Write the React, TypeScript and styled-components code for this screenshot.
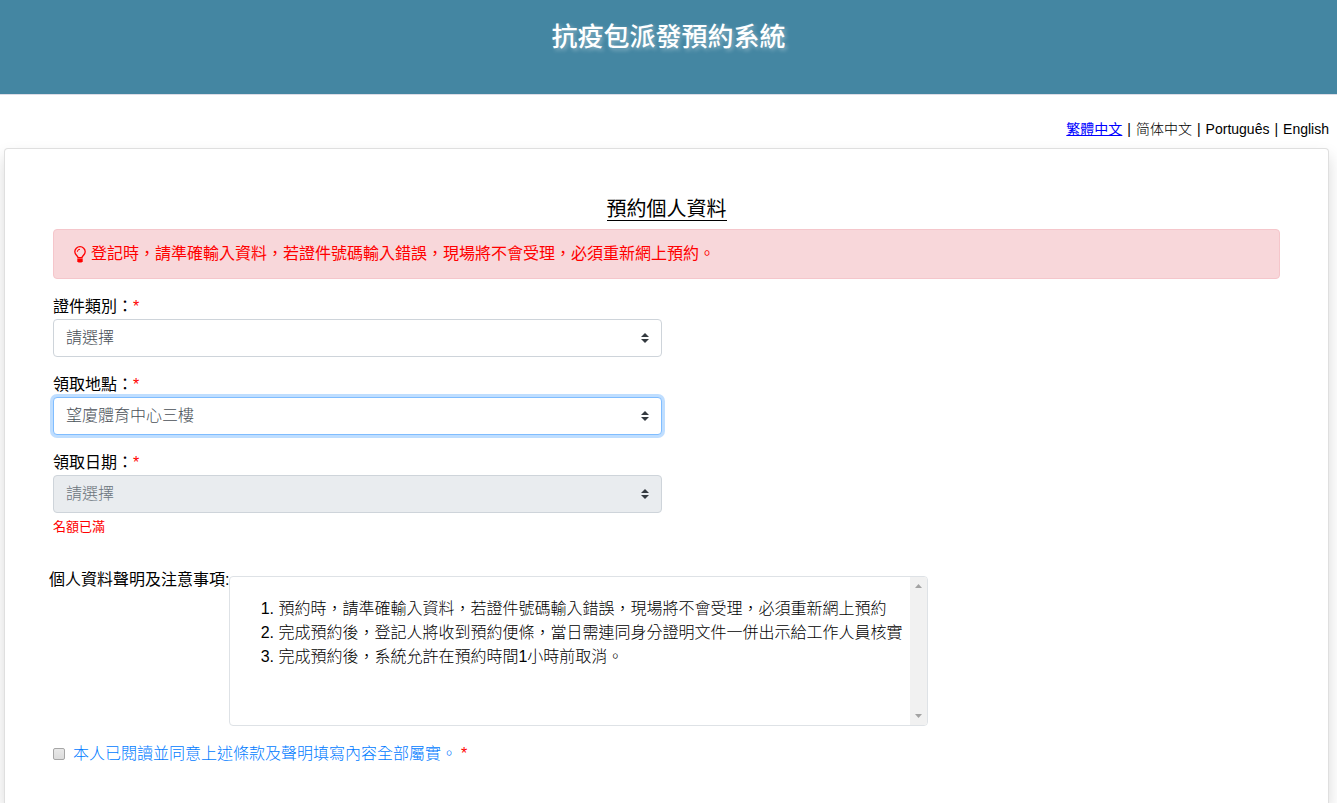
import React from "react";
import styled, { createGlobalStyle, css } from "styled-components";

const GlobalStyle = createGlobalStyle`
  *, *::before, *::after { box-sizing: border-box; }
  body {
    margin: 0;
    background: #fff;
    color: #000;
    font-family: "Liberation Sans", "Noto Sans CJK TC", sans-serif;
    font-size: 16px;
    line-height: 24px;
  }
`;

const Page = styled.div`
  display: flex;
  flex-direction: column;
  min-height: 100vh;
`;

const Header = styled.header`
  background: #4486a2;
  border-bottom: 1px solid #dcdce6;
  padding: 21px 16px 41px;
  text-align: center;
`;

const SiteTitle = styled.h1`
  margin: 0;
  color: #fff;
  font-size: 26px;
  font-weight: 500;
  line-height: 32px;
  text-shadow: 2px 2px 4px rgba(255, 255, 255, 0.4);
`;

const LanguageBar = styled.nav`
  display: flex;
  justify-content: flex-end;
  gap: 5px;
  padding: 24px 8px 9px;
  font-size: 14px;
  line-height: 20px;
`;

const LanguageLink = styled.a<{ $active?: boolean }>`
  color: ${(p) => (p.$active ? "#00f" : "#000")};
  font-weight: ${(p) => (p.$active ? 400 : 300)};
  text-decoration: ${(p) => (p.$active ? "underline" : "none")};
`;

const Card = styled.main`
  flex: 1;
  margin: 0 8px 0 4px;
  padding: 48px 48px 32px;
  background: #fff;
  border: 1px solid #dfdfdf;
  border-bottom: 0;
  border-radius: 4px 4px 0 0;
  box-shadow: 0 8px 16px rgba(0, 0, 0, 0.15);
`;

const SectionTitle = styled.h2`
  width: fit-content;
  margin: 0 auto 8px;
  padding-top: 2px;
  border-bottom: 1px solid #000;
  font-size: 20px;
  font-weight: 400;
  line-height: 21px;
`;

const Alert = styled.div`
  display: flex;
  align-items: center;
  gap: 5px;
  margin-bottom: 16px;
  padding: 12px 20px;
  border: 1px solid #f5c6cb;
  border-radius: 4px;
  background: #f8d7da;
  color: #f00;
`;

const Bulb = styled.svg`
  flex: none;
  width: 12px;
  height: 17px;
`;

const Fields = styled.div`
  display: grid;
  grid-template-columns: 1fr 1fr;
  column-gap: 9px;
`;

const Field = styled.div`
  grid-column: 1;
  display: flex;
  flex-direction: column;
  margin-bottom: 16px;
`;

const Required = styled.span`
  color: #f00;
`;

const caret =
  "url(\"data:image/svg+xml,%3csvg xmlns='http://www.w3.org/2000/svg' viewBox='0 0 4 5'%3e%3cpath fill='%23343a40' d='M2 0L0 2h4zm0 5L0 3h4z'/%3e%3c/svg%3e\")";

const Select = styled.select<{ $focused?: boolean }>`
  appearance: none;
  width: 100%;
  height: 38px;
  padding: 6px 28px 6px 12px;
  border: 1px solid #ced4da;
  border-radius: 4px;
  outline: 0;
  background: #fff ${caret} no-repeat right 12px center / 8px 10px;
  color: #495057;
  font: 300 16px/24px "Liberation Sans", "Noto Sans CJK TC", sans-serif;

  &:disabled {
    background-color: #e9ecef;
    color: #6c757d;
    opacity: 1;
  }

  ${(p) =>
    p.$focused &&
    css`
      border-color: #80bdff;
      box-shadow: 0 0 0 3px rgba(0, 123, 255, 0.25);
    `}
`;

const FieldError = styled.small`
  margin-top: 4px;
  color: #f00;
  font-size: 13px;
  line-height: 20px;
`;

const Statement = styled.section`
  display: flex;
  align-items: flex-start;
  margin: 15px 0 16px -4px;
`;

const StatementTitle = styled.h3`
  flex: none;
  margin: 0;
  font-size: 16px;
  font-weight: 400;
  line-height: 24px;
`;

const TermsBox = styled.div`
  display: flex;
  flex: 0 1 699px;
  height: 150px;
  margin-top: 8px;
  border: 1px solid #dee2e6;
  border-radius: 4px;
  overflow: hidden;
`;

const Terms = styled.ol`
  flex: 1;
  margin: 0;
  padding: 20px 0 0 48px;
  font-weight: 300;
  white-space: nowrap;
`;

const ScrollTrack = styled.div`
  display: flex;
  flex: none;
  flex-direction: column;
  align-items: center;
  justify-content: space-between;
  width: 17px;
  padding: 7px 0;
  background: #f1f1f1;
`;

const ScrollArrow = styled.svg`
  width: 7px;
  height: 4px;
  fill: #a3a3a3;
`;

const Consent = styled.label`
  display: flex;
  align-items: center;
  color: #007bff;
  font-weight: 300;
`;

const Checkbox = styled.input`
  appearance: none;
  width: 12px;
  height: 12px;
  margin: 0 8px 0 0;
  border: 1px solid #a6a6a6;
  border-radius: 2px;
  background: linear-gradient(#e8e8e8, #dcdcdc);

  &:checked {
    background: #007bff;
  }
`;

const ConsentText = styled.span`
  margin-right: 4px;
`;

const languages = ["繁體中文", "简体中文", "Português", "English"];

const terms = [
  "預約時，請準確輸入資料，若證件號碼輸入錯誤，現場將不會受理，必須重新網上預約",
  "完成預約後，登記人將收到預約便條，當日需連同身分證明文件一併出示給工作人員核實",
  "完成預約後，系統允許在預約時間1小時前取消。",
];

interface SelectFieldProps {
  id: string;
  label: string;
  value: string;
  focused?: boolean;
  disabled?: boolean;
  error?: string;
}

function SelectField({ id, label, value, focused, disabled, error }: SelectFieldProps) {
  return (
    <Field>
      <label htmlFor={id}>
        {label}：<Required>*</Required>
      </label>
      <Select id={id} $focused={focused} disabled={disabled} defaultValue={value}>
        <option value={value}>{value}</option>
      </Select>
      {error && <FieldError>{error}</FieldError>}
    </Field>
  );
}

export default function App() {
  return (
    <Page lang="zh-Hant">
      <GlobalStyle />
      <Header>
        <SiteTitle>抗疫包派發預約系統</SiteTitle>
      </Header>
      <LanguageBar>
        {languages.map((name, i) => (
          <React.Fragment key={name}>
            {i > 0 && <span>|</span>}
            <LanguageLink href="#" $active={i === 0}>
              {name}
            </LanguageLink>
          </React.Fragment>
        ))}
      </LanguageBar>
      <Card>
        <SectionTitle>預約個人資料</SectionTitle>
        <Alert role="alert">
          <Bulb viewBox="0 0 12 17" aria-hidden="true">
            <path
              d="M4 11.6C3.8 9.8.8 8.7.8 5.7a5.2 5 0 0 1 10.4 0c0 3-3 4.1-3.2 5.9z"
              fill="none"
              stroke="currentColor"
              strokeWidth="1.3"
            />
            <path d="M3.3 5.8a2.6 2.6 0 0 1 2.7-2.5" fill="none" stroke="currentColor" />
            <path d="M3.3 12.6h5.4v2.6L7.5 16.5h-3l-1.2-1.3z" fill="currentColor" />
          </Bulb>
          <span>登記時，請準確輸入資料，若證件號碼輸入錯誤，現場將不會受理，必須重新網上預約。</span>
        </Alert>
        <Fields>
          <SelectField id="doc-type" label="證件類別" value="請選擇" />
          <SelectField id="location" label="領取地點" value="望廈體育中心三樓" focused />
          <SelectField id="date" label="領取日期" value="請選擇" disabled error="名額已滿" />
        </Fields>
        <Statement>
          <StatementTitle>個人資料聲明及注意事項:</StatementTitle>
          <TermsBox>
            <Terms>
              {terms.map((t) => (
                <li key={t}>{t}</li>
              ))}
            </Terms>
            <ScrollTrack aria-hidden="true">
              <ScrollArrow viewBox="0 0 7 4">
                <path d="M0 4L3.5 0L7 4z" />
              </ScrollArrow>
              <ScrollArrow viewBox="0 0 7 4">
                <path d="M0 0L3.5 4L7 0z" />
              </ScrollArrow>
            </ScrollTrack>
          </TermsBox>
        </Statement>
        <Consent>
          <Checkbox type="checkbox" />
          <ConsentText>本人已閱讀並同意上述條款及聲明填寫內容全部屬實。</ConsentText>
          <Required>*</Required>
        </Consent>
      </Card>
    </Page>
  );
}
